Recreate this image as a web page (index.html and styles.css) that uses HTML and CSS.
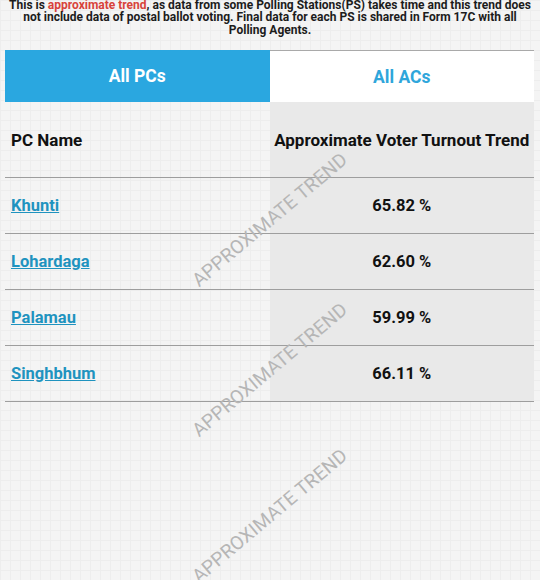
FILE: index.html
```html
<!DOCTYPE html>
<html>
<head>
<meta charset="utf-8">
<link rel="stylesheet" href="styles.css">
</head>
<body>
<div class="page">
  <p class="notice">This is <span class="red">approximate trend</span>, as data from some Polling Stations(PS) takes time and this trend does not include data of postal ballot voting. Final data for each PS is shared in Form 17C with all Polling Agents.</p>
  <div class="panel">
    <div class="tabs">
      <div class="tab active">All PCs</div>
      <div class="tab">All ACs</div>
    </div>
    <table class="grid">
      <thead>
        <tr><th class="name">PC Name</th><th class="val">Approximate Voter Turnout Trend</th></tr>
      </thead>
      <tbody>
        <tr><td class="name"><a href="#">Khunti</a></td><td class="val">65.82 %</td></tr>
        <tr><td class="name"><a href="#">Lohardaga</a></td><td class="val">62.60 %</td></tr>
        <tr><td class="name"><a href="#">Palamau</a></td><td class="val">59.99 %</td></tr>
        <tr><td class="name"><a href="#">Singhbhum</a></td><td class="val">66.11 %</td></tr>
      </tbody>
    </table>
  </div>
  <span class="wm wm1">APPROXIMATE TREND</span>
  <span class="wm wm2">APPROXIMATE TREND</span>
  <span class="wm wm3">APPROXIMATE TREND</span>
</div>
</body>
</html>
```
FILE: styles.css
```css
html, body {
  margin: 0;
  padding: 0;
}
body {
  width: 540px;
  height: 580px;
  overflow: hidden;
  font-family: Roboto, "Liberation Sans", sans-serif;
  background-color: #f4f4f4;
  background-image:
    linear-gradient(to right, #ededed 1px, transparent 1px),
    linear-gradient(to bottom, #ededed 1px, transparent 1px);
  background-size: 10px 10px;
}
.page {
  position: relative;
  height: 580px;
}
.notice {
  margin: 0;
  padding: 0 5px;
  height: 49px;
  box-sizing: border-box;
  margin-top: -1px;
  font-size: 12px;
  line-height: 12.4px;
  font-weight: 700;
  color: #1c1c1c;
  text-align: center;
}
.red {
  color: #d8433b;
}
.panel {
  margin: 2px 6px 0 5px;
}
.tabs {
  display: flex;
  height: 51px;
  border-top: 1px solid #a9a9a9;
}
.tab {
  flex: 1;
  display: flex;
  align-items: center;
  justify-content: center;
  font-size: 17.5px;
  font-weight: 700;
  color: #2fa6db;
  background: #ffffff;
}
.tab.active {
  background: #2aa7e0;
  color: #ffffff;
  margin-top: -1px;
  height: 52px;
}
.grid {
  width: 100%;
  border-collapse: collapse;
  table-layout: fixed;
}
.grid th, .grid td {
  padding: 0 6px;
  font-size: 16.5px;
  font-weight: 700;
  color: #111;
  border-bottom: 1px solid #9e9e9e;
  white-space: nowrap;
}
.grid th {
  height: 75px;
  font-size: 17px;
}
.grid th.val {
  padding: 0 2px;
}
.grid td {
  height: 55px;
}
.grid .name {
  text-align: left;
}
.grid .val {
  text-align: center;
  background: #e9e9e9;
}
.grid a {
  color: #1f93bf;
  text-decoration: underline;
}
.wm {
  position: absolute;
  left: 0;
  top: 0;
  width: 260px;
  text-align: center;
  font-size: 19px;
  line-height: 20px;
  color: #b6b6b6;
  letter-spacing: 0.2px;
  white-space: nowrap;
  transform: rotate(-40deg);
  pointer-events: none;
}
.wm1 { left: 140px; top: 211px; }
.wm2 { left: 140px; top: 361px; }
.wm3 { left: 140px; top: 507px; }
```
